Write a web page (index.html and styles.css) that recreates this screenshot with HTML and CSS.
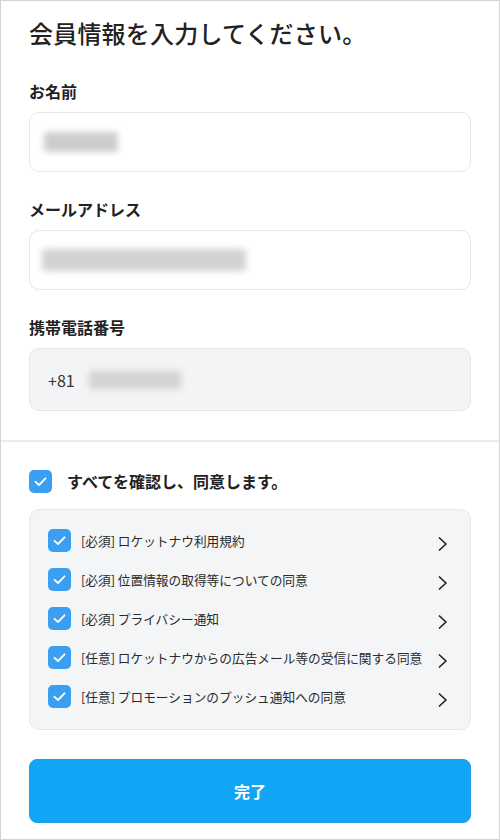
FILE: index.html
```html
<!DOCTYPE html>
<html lang="ja">
<head>
<meta charset="utf-8">
<link rel="stylesheet" href="styles.css">
</head>
<body>
<div class="page">
  <div class="form">
    <h1 class="title">会員情報を入力してください。</h1>
    <div class="field">
      <div class="label">お名前</div>
      <div class="input"><span class="blur blur-name"></span></div>
    </div>
    <div class="field">
      <div class="label">メールアドレス</div>
      <div class="input"><span class="blur blur-mail"></span></div>
    </div>
    <div class="field">
      <div class="label">携帯電話番号</div>
      <div class="input input-disabled"><span class="prefix">+81</span><span class="blur blur-phone"></span></div>
    </div>
  </div>
  <div class="divider"></div>
  <div class="agree">
    <div class="agree-all">
      <span class="check check-lg"><svg viewBox="0 0 23 23" width="23" height="23"><path d="M6.5 11.8 L10 15 L16.5 8.3" fill="none" stroke="#fff" stroke-width="1.8" stroke-linecap="round" stroke-linejoin="round"/></svg></span>
      <span class="agree-all-text">すべてを確認し、同意します。</span>
    </div>
    <div class="terms">
      <div class="term">
        <span class="check"><svg viewBox="0 0 23 23" width="23" height="23"><path d="M6.5 11.8 L10 15 L16.5 8.3" fill="none" stroke="#fff" stroke-width="1.8" stroke-linecap="round" stroke-linejoin="round"/></svg></span>
        <span class="term-text">[必須] ロケットナウ利用規約</span>
        <svg class="chev" viewBox="0 0 10 14" width="10" height="14"><path d="M1.5 1 L8 7 L1.5 13" fill="none" stroke="#222" stroke-width="1.7" stroke-linecap="round" stroke-linejoin="round"/></svg>
      </div>
      <div class="term">
        <span class="check"><svg viewBox="0 0 23 23" width="23" height="23"><path d="M6.5 11.8 L10 15 L16.5 8.3" fill="none" stroke="#fff" stroke-width="1.8" stroke-linecap="round" stroke-linejoin="round"/></svg></span>
        <span class="term-text">[必須] 位置情報の取得等についての同意</span>
        <svg class="chev" viewBox="0 0 10 14" width="10" height="14"><path d="M1.5 1 L8 7 L1.5 13" fill="none" stroke="#222" stroke-width="1.7" stroke-linecap="round" stroke-linejoin="round"/></svg>
      </div>
      <div class="term">
        <span class="check"><svg viewBox="0 0 23 23" width="23" height="23"><path d="M6.5 11.8 L10 15 L16.5 8.3" fill="none" stroke="#fff" stroke-width="1.8" stroke-linecap="round" stroke-linejoin="round"/></svg></span>
        <span class="term-text">[必須] プライバシー通知</span>
        <svg class="chev" viewBox="0 0 10 14" width="10" height="14"><path d="M1.5 1 L8 7 L1.5 13" fill="none" stroke="#222" stroke-width="1.7" stroke-linecap="round" stroke-linejoin="round"/></svg>
      </div>
      <div class="term">
        <span class="check"><svg viewBox="0 0 23 23" width="23" height="23"><path d="M6.5 11.8 L10 15 L16.5 8.3" fill="none" stroke="#fff" stroke-width="1.8" stroke-linecap="round" stroke-linejoin="round"/></svg></span>
        <span class="term-text">[任意] ロケットナウからの広告メール等の受信に関する同意</span>
        <svg class="chev" viewBox="0 0 10 14" width="10" height="14"><path d="M1.5 1 L8 7 L1.5 13" fill="none" stroke="#222" stroke-width="1.7" stroke-linecap="round" stroke-linejoin="round"/></svg>
      </div>
      <div class="term">
        <span class="check"><svg viewBox="0 0 23 23" width="23" height="23"><path d="M6.5 11.8 L10 15 L16.5 8.3" fill="none" stroke="#fff" stroke-width="1.8" stroke-linecap="round" stroke-linejoin="round"/></svg></span>
        <span class="term-text">[任意] プロモーションのプッシュ通知への同意</span>
        <svg class="chev" viewBox="0 0 10 14" width="10" height="14"><path d="M1.5 1 L8 7 L1.5 13" fill="none" stroke="#222" stroke-width="1.7" stroke-linecap="round" stroke-linejoin="round"/></svg>
      </div>
    </div>
    <button class="submit">完了</button>
  </div>
</div>
</body>
</html>
```
FILE: styles.css
```css
* { box-sizing: border-box; }
html, body { margin: 0; padding: 0; background: #fff; }
body {
  font-family: "Noto Sans CJK JP", "Noto Sans", sans-serif;
  color: #222;
}
.page {
  width: 500px;
  height: 840px;
  border: 1px solid #d4d4d4;
  overflow: hidden;
}
.form {
  padding: 15px 28px 0;
}
.title {
  margin: 0 0 30px;
  font-size: 24px;
  line-height: 34px;
  font-weight: 500;
  letter-spacing: 0.2px;
}
.field { margin-bottom: 26px; }
.field:last-child { margin-bottom: 0; }
.label {
  font-size: 16px;
  line-height: 22px;
  font-weight: 700;
  margin-bottom: 10px;
}
.input {
  height: 60px;
  border: 1px solid #e6e6e8;
  border-radius: 10px;
  background: #fff;
  display: flex;
  align-items: center;
  padding: 0 12px;
}
.input-disabled {
  height: 63px;
  background: #f3f4f6;
  padding-left: 18px;
}
.prefix {
  font-size: 16px;
  color: #333;
  margin-right: 14px;
}
.blur {
  display: block;
  background: #cdcdcd;
  filter: blur(3px);
  border-radius: 2px;
}
.blur-name { width: 74px; height: 20px; margin-left: 2px; }
.blur-mail { width: 204px; height: 22px; margin-left: 0; background: #d2d2d2; }
.blur-phone { width: 92px; height: 18px; background: #d3d3d3; }
.divider {
  height: 2px;
  background: #ebebeb;
  margin-top: 29px;
}
.agree {
  padding: 28px 28px 0;
}
.agree-all {
  display: flex;
  align-items: center;
  gap: 15px;
  height: 23px;
}
.agree-all-text {
  font-size: 16px;
  font-weight: 700;
  line-height: 23px;
}
.check {
  flex: none;
  width: 23px;
  height: 23px;
  border-radius: 5px;
  background: #3a9ff0;
  display: flex;
}
.terms {
  margin-top: 16px;
  background: #f4f5f7;
  border: 1px solid #e7e8ea;
  border-radius: 10px;
  padding: 19px 22px 21px 18px;
  display: flex;
  flex-direction: column;
  gap: 16px;
}
.term {
  display: flex;
  align-items: center;
  height: 23px;
}
.term-text {
  flex: 1;
  margin-left: 10px;
  font-size: 12.7px;
  line-height: 23px;
  color: #2a2a2a;
  white-space: nowrap;
}
.chev {
  flex: none;
  margin-top: 6px;
}
.submit {
  display: block;
  width: 100%;
  height: 64px;
  margin-top: 29px;
  border: 1px solid #1d9ee8;
  border-radius: 8px;
  background: #10a6f5;
  color: #fff;
  font-family: inherit;
  font-size: 16px;
  font-weight: 700;
}
```
